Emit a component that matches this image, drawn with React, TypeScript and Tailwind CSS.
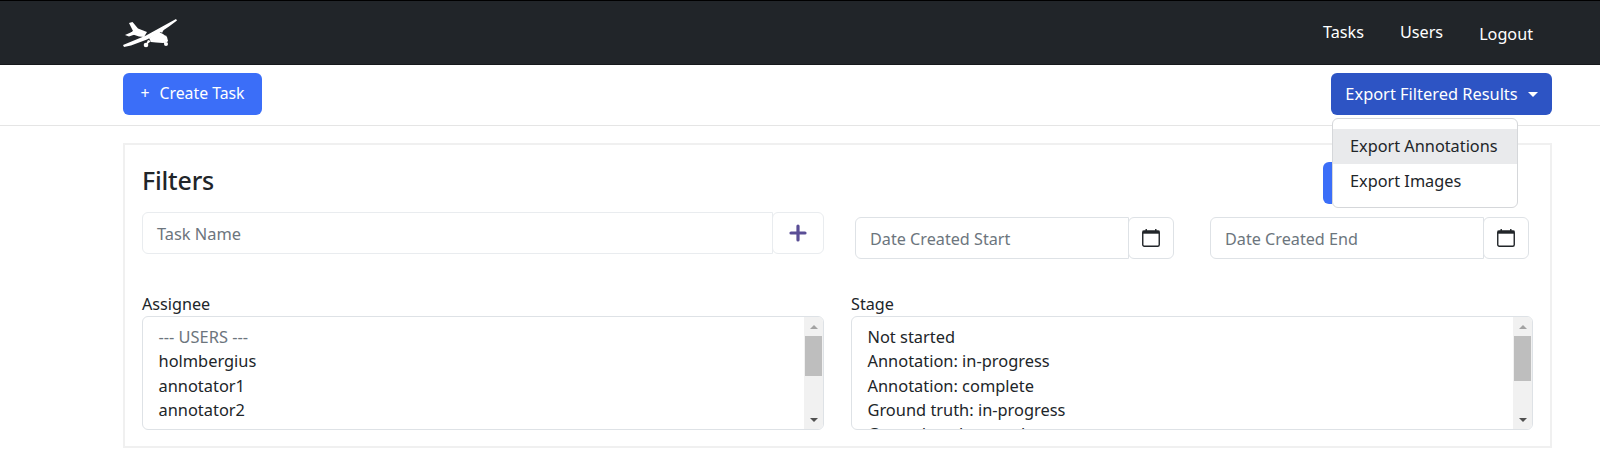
import React from "react";

const font = { fontFamily: '"Noto Sans", "Open Sans", sans-serif' };

function Plane() {
  return (
    <svg width="56" height="30" viewBox="0 0 56 30" fill="white">
      <path d="M1 27 L24 17.5 L34 12 L44 6.5 L54 1 L55 2.5 L47 8.5 L38 14.5 L25 21.5 L9 27.5 L2 29 Z" />
      <path d="M7 5 L10.5 4 L16 10.5 L25 14 L22 19 L17 18.5 L8 15.5 L11 13 Z" />
      <path d="M3 17 L12 13 L17 15 L7 18.5 Z" />
      <path d="M27 20 L37 14 L41 16 L45 19 L46 23 L41 25 L34 24.5 L29 24 Z" />
      <path d="M38 13 L41 10 L42 11 L40 15 Z" />
      <path d="M44 17 L45.5 24 L44 24 L43 19 Z" />
      <circle cx="24" cy="27" r="2.3" />
      <circle cx="44" cy="26" r="2" />
      <path d="M26 22 L24 26 L25 26.5 L29 23 Z" />
      <path d="M40 23 L43 26 L44 25 L42 22 Z" />
    </svg>
  );
}

function Calendar() {
  return (
    <svg width="18" height="18" viewBox="0 0 18 18" fill="none">
      <rect x="0.75" y="2.25" width="16.5" height="15" rx="1.5" stroke="#212529" strokeWidth="1.4" />
      <rect x="0.5" y="1.5" width="17" height="3.2" fill="#212529" />
      <rect x="3.5" y="0" width="1.4" height="2" fill="#212529" />
      <rect x="13.1" y="0" width="1.4" height="2" fill="#212529" />
    </svg>
  );
}

function DateGroup({ placeholder }: { placeholder: string }) {
  return (
    <div className="flex w-[319px] h-[42px] mt-[5px]">
      <div className="w-[274px] border border-[#dee2e6] rounded-l-md flex items-center pl-[14px] pt-[3px] text-[#6c757d] text-[16.2px] bg-white">
        {placeholder}
      </div>
      <div className="w-[46px] -ml-px border border-[#dee2e6] rounded-md flex items-center justify-center bg-white">
        <Calendar />
      </div>
    </div>
  );
}

function FakeScrollbar({ thumb }: { thumb: string }) {
  return (
    <div className="w-[19px] shrink-0 bg-[#f1f1f1] flex flex-col items-center">
      <div className="h-[19px] flex items-center justify-center">
        <div className="w-0 h-0 border-l-[4px] border-r-[4px] border-b-[4px] border-l-transparent border-r-transparent border-b-[#a3a3a3]" />
      </div>
      <div className={`w-[17px] bg-[#bebebe] ${thumb}`} />
      <div className="flex-1" />
      <div className="h-[19px] flex items-center justify-center">
        <div className="w-0 h-0 border-l-[4px] border-r-[4px] border-t-[4px] border-l-transparent border-r-transparent border-t-[#505050]" />
      </div>
    </div>
  );
}

function ListBox({ label, items, thumb, muted }: { label: string; items: string[]; thumb: string; muted?: boolean }) {
  return (
    <div className="w-[682px]">
      <div className="text-[16.2px] leading-[24px] text-[#212529]">{label}</div>
      <div className="flex h-[114px] border border-[#dee2e6] rounded-md overflow-hidden bg-white">
        <div className="flex-1 overflow-hidden pl-[15.5px] pt-[8px] text-[16.4px] leading-[24.3px] text-[#212529] whitespace-nowrap">
          {items.map((t, i) => (
            <div key={t} className={muted && i === 0 ? "text-[#6c757d]" : ""}>
              {t}
            </div>
          ))}
        </div>
        <FakeScrollbar thumb={thumb} />
      </div>
    </div>
  );
}

export default function App() {
  return (
    <div className="w-[1600px] h-[453px] overflow-hidden bg-white text-[#212529]" style={font}>
      <nav className="h-[65px] bg-[#212529] border-t border-t-black border-b border-b-[#16181b] pl-[122px] pr-[67px] flex items-center justify-between text-white">
        <Plane />
        <div className="flex items-center text-[16.2px] gap-[36px]">
          <span>Tasks</span>
          <span>Users</span>
          <span className="mt-1">Logout</span>
        </div>
      </nav>

      <div className="relative h-[61px] border-b border-[#e5e5e5] pl-[123px] pr-[48px] pt-[8px] flex justify-between items-start">
        <button className="h-[42px] w-[139px] rounded-md bg-[#3b6ef8] text-white text-[15.8px] flex items-center justify-center gap-[10px]">
          <span>+</span>
          <span>Create Task</span>
        </button>
        <button className="h-[42px] w-[221px] rounded-md bg-[#2d54c4] text-white text-[16.4px] flex items-center justify-center gap-[10px]">
          <span>Export Filtered Results</span>
          <span className="w-0 h-0 border-l-[5px] border-r-[5px] border-t-[5px] border-l-transparent border-r-transparent border-t-white" />
        </button>
        <div className="absolute z-10 left-[1332px] top-[53px] w-[186px] h-[90px] border border-[#d5d7da] rounded-md bg-white py-[10px] text-[16.3px] text-[#212529]">
          <div className="h-[35px] bg-[#e9eaec] pl-[17px] flex items-center">Export Annotations</div>
          <div className="h-[35px] pl-[17px] flex items-center">Export Images</div>
        </div>
      </div>

      <section className="relative mx-[123px] mt-[17px] w-[1429px] h-[305px] border-2 border-[#f0f0f0] px-[17px] pt-[15px]">
        <div className="absolute right-[218px] top-[17px] w-[9px] h-[42px] bg-[#3b6ef8] rounded-l-md" />
        <h2 className="text-[25px] leading-[40px] font-medium h-[40px] tracking-[-0.2px]">Filters</h2>
        <div className="flex mt-[12px]">
          <div className="flex w-[682px] h-[42px]">
            <div className="flex-1 border border-[#e9ecef] rounded-l-md flex items-center pl-[14px] pt-[3px] text-[#6c757d] text-[16.4px]">
              Task Name
            </div>
            <div className="w-[52px] -ml-px border border-[#e9ecef] rounded-md flex items-center justify-center">
              <svg width="18" height="18" viewBox="0 0 18 18" fill="none" stroke="#5a4e96" strokeWidth="3.2" strokeLinecap="round">
                <path d="M9 2 V16 M2 9 H16" />
              </svg>
            </div>
          </div>
          <div className="ml-[31px]">
            <DateGroup placeholder="Date Created Start" />
          </div>
          <div className="ml-[36px]">
            <DateGroup placeholder="Date Created End" />
          </div>
        </div>
        <div className="flex gap-[27px] mt-[33px]">
          <ListBox label="Assignee" muted thumb="h-[40px]" items={["--- USERS ---", "holmbergius", "annotator1", "annotator2"]} />
          <ListBox label="Stage" thumb="h-[45px]" items={["Not started", "Annotation: in-progress", "Annotation: complete", "Ground truth: in-progress", "Ground truth: complete"]} />
        </div>
      </section>
    </div>
  );
}
